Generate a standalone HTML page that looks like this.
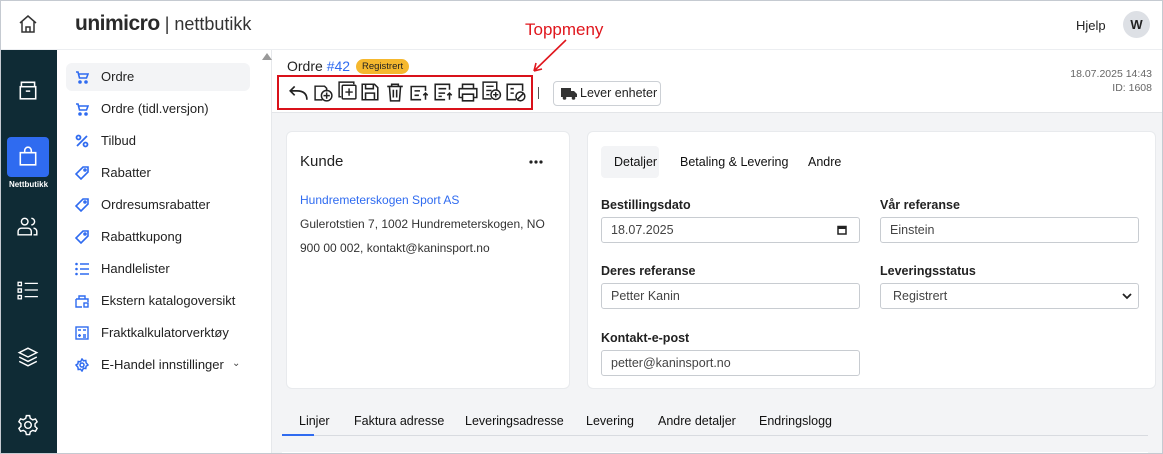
<!DOCTYPE html>
<html><head><meta charset="utf-8"><style>
*{box-sizing:border-box;margin:0;padding:0}
body{width:1163px;height:454px;overflow:hidden;font-family:"Liberation Sans",sans-serif;color:#222;background:#fff;position:relative}
.frame{position:absolute;inset:0;border:1px solid #c5cad1;pointer-events:none;z-index:9}
.hdr{position:absolute;left:0;top:0;width:1163px;height:50px;border-bottom:1px solid #eceef1;background:#fff}
.rail{position:absolute;left:0;top:50px;width:57px;height:404px;background:#0f2b35}
.side{position:absolute;left:57px;top:50px;width:215px;height:404px;background:#fff;border-right:1px solid #e6e8eb}
.main{position:absolute;left:272px;top:50px;width:891px;height:404px;background:#f3f4f6}
.tb{position:absolute;left:0;top:0;width:891px;height:63px;background:#fff;border-bottom:1px solid #e3e5e8}
.item{position:absolute;left:9px;width:184px;height:28px;border-radius:6px;font-size:13px;line-height:28px;padding-left:35px;color:#222}
.item svg{position:absolute;left:9px;top:7px}
.card{position:absolute;background:#fff;border-radius:6px;border:1px solid #e8eaed}
.lbl{position:absolute;font-size:12.5px;font-weight:bold;color:#222}
.inp{position:absolute;height:26px;border:1px solid #c8ccd1;border-radius:3px;font-size:12.5px;line-height:24px;padding-left:9px;color:#444;background:#fff}
.tab{position:absolute;font-size:12.5px;color:#111}
.ic{position:absolute;top:32px}
</style></head><body>
<div class="hdr">
 <svg style="position:absolute;left:18px;top:14px" width="20" height="20" viewBox="0 0 20 20" fill="none" stroke="#333" stroke-width="1.5"><path d="M2 9 10 2l8 7M4 7.5V18h12V7.5M8 18v-5h4v5"/></svg>
 <div style="position:absolute;left:75px;top:12px;font-size:21px;font-weight:bold;letter-spacing:-0.5px;color:#2a2a2a">unimicro<span style="font-weight:normal;font-size:18px;color:#333;letter-spacing:0"> | nettbutikk</span></div>
 <div style="position:absolute;left:1076px;top:18px;font-size:13px">Hjelp</div>
 <div style="position:absolute;left:1123px;top:11px;width:27px;height:27px;border-radius:50%;background:#dde0e5;font-size:13px;font-weight:bold;text-align:center;line-height:27px">W</div>
</div>
<div class="rail">
 <svg style="position:absolute;left:17px;top:29px" width="22" height="22" viewBox="0 0 20 20" fill="none" stroke="#fff" stroke-width="1.4"><rect x="3" y="7" width="14" height="11"/><path d="M4 7V3h12v4M8 11h4"/></svg>
 <div style="position:absolute;left:7px;top:87px;width:42px;height:40px;background:#2f6bf0;border-radius:4px"></div>
 <svg style="position:absolute;left:17px;top:95px" width="22" height="22" viewBox="0 0 20 20" fill="none" stroke="#fff" stroke-width="1.4"><path d="M3 7h14v11H3zM7 7V5a3 3 0 0 1 6 0v2"/></svg>
 <div style="position:absolute;left:0;top:130px;width:57px;text-align:center;color:#fff;font-size:8px;font-weight:bold">Nettbutikk</div>
 <svg style="position:absolute;left:17px;top:165px" width="22" height="22" viewBox="0 0 20 20" fill="none" stroke="#fff" stroke-width="1.3"><circle cx="7" cy="6" r="3"/><path d="M1 18v-3a3 3 0 0 1 3-3h6a3 3 0 0 1 3 3v3zM13 3a3 3 0 0 1 0 6M15 12a3 3 0 0 1 3 3v3h-3"/></svg>
 <svg style="position:absolute;left:17px;top:229px" width="22" height="22" viewBox="0 0 20 20" fill="none" stroke="#fff" stroke-width="1.2"><rect x="1" y="3" width="3" height="3"/><rect x="1" y="9" width="3" height="3"/><rect x="1" y="15" width="3" height="3"/><path d="M7 4h12M7 10h12M7 16h12"/></svg>
 <svg style="position:absolute;left:17px;top:296px" width="22" height="22" viewBox="0 0 20 20" fill="none" stroke="#fff" stroke-width="1.3"><path d="M10 2 2 6l8 4 8-4zM2 10l8 4 8-4M2 14l8 4 8-4"/></svg>
 <svg style="position:absolute;left:17px;top:364px" width="22" height="22" viewBox="0 0 20 20" fill="none" stroke="#fff" stroke-width="1.3"><circle cx="10" cy="10" r="3"/><path d="M8.5 1.5h3l.6 2.5 2.2 1.3 2.5-.8 1.5 2.6-1.9 1.8v2.4l1.9 1.8-1.5 2.6-2.5-.8-2.2 1.3-.6 2.5h-3l-.6-2.5-2.2-1.3-2.5.8-1.5-2.6 1.9-1.8V8.8L1.7 7l1.5-2.6 2.5.8L7.9 4z"/></svg>
</div>
<div class="side">
 <div style="position:absolute;left:205px;top:3px;width:0;height:0;border-left:5px solid transparent;border-right:5px solid transparent;border-bottom:7px solid #999"></div>
 <div class="item" style="top:13px;background:#f3f4f6">Ordre<svg width="14" height="14" viewBox="0 0 14 14" fill="none" stroke="#2f6bf0" stroke-width="1.6"><path d="M1 2h2l1.5 6h7L13 4H4"/><circle cx="5" cy="12" r="1" fill="#2f6bf0"/><circle cx="11" cy="12" r="1" fill="#2f6bf0"/></svg></div>
 <div class="item" style="top:45px">Ordre (tidl.versjon)<svg width="14" height="14" viewBox="0 0 14 14" fill="none" stroke="#2f6bf0" stroke-width="1.6"><path d="M1 2h2l1.5 6h7L13 4H4"/><circle cx="5" cy="12" r="1" fill="#2f6bf0"/><circle cx="11" cy="12" r="1" fill="#2f6bf0"/></svg></div>
 <div class="item" style="top:77px">Tilbud<svg width="14" height="14" viewBox="0 0 14 14" fill="none" stroke="#2f6bf0" stroke-width="1.8"><circle cx="3.5" cy="3.5" r="2"/><circle cx="10.5" cy="10.5" r="2"/><path d="M12 2 2 12"/></svg></div>
 <div class="item" style="top:109px">Rabatter<svg width="14" height="14" viewBox="0 0 14 14" fill="none" stroke="#2f6bf0" stroke-width="1.6"><path d="M8 1h5v5l-7 7-5-5z"/><circle cx="10" cy="4" r="1"/></svg></div>
 <div class="item" style="top:141px">Ordresumsrabatter<svg width="14" height="14" viewBox="0 0 14 14" fill="none" stroke="#2f6bf0" stroke-width="1.6"><path d="M8 1h5v5l-7 7-5-5z"/><circle cx="10" cy="4" r="1"/></svg></div>
 <div class="item" style="top:173px">Rabattkupong<svg width="14" height="14" viewBox="0 0 14 14" fill="none" stroke="#2f6bf0" stroke-width="1.6"><path d="M8 1h5v5l-7 7-5-5z"/><circle cx="10" cy="4" r="1"/></svg></div>
 <div class="item" style="top:205px">Handlelister<svg width="14" height="14" viewBox="0 0 14 14" fill="#2f6bf0" stroke="#2f6bf0" stroke-width="1.6"><circle cx="1.5" cy="2" r="1.3" stroke="none"/><circle cx="1.5" cy="7" r="1.3" stroke="none"/><circle cx="1.5" cy="12" r="1.3" stroke="none"/><path d="M5 2h9M5 7h9M5 12h9"/></svg></div>
 <div class="item" style="top:237px">Ekstern katalogoversikt<svg width="14" height="14" viewBox="0 0 14 14" fill="none" stroke="#2f6bf0" stroke-width="1.4"><path d="M1 5h12v3M1 5v8h6M4 5V2h6v3"/><rect x="9" y="9" width="4" height="4"/></svg></div>
 <div class="item" style="top:269px">Fraktkalkulatorverktøy<svg width="14" height="14" viewBox="0 0 14 14" fill="none" stroke="#2f6bf0" stroke-width="1.4"><rect x="1" y="1" width="12" height="12"/><path d="M3 4h3M4.5 8v3M3 9.5h3M8 4h3M8 9h3M8 11h3"/></svg></div>
 <div class="item" style="top:301px">E-Handel innstillinger<span style="position:absolute;left:166px;top:-1px;font-size:10px;color:#444">&#8964;</span><svg width="14" height="14" viewBox="0 0 14 14" fill="none" stroke="#2f6bf0" stroke-width="1.5"><circle cx="7" cy="7" r="2"/><path d="M7 1l1.5 1.8 2.3-.3.3 2.3L13 7l-1.9 1.2-.3 2.3-2.3-.3L7 13l-1.5-1.8-2.3.3-.3-2.3L1 7l1.9-1.2.3-2.3 2.3.3z"/></svg></div>
</div>
<div class="main">
 <div class="tb">
  <div style="position:absolute;left:15px;top:8px;font-size:14px">Ordre <span style="color:#2f6bf0">#42</span></div>
  <div style="position:absolute;left:84px;top:9px;background:#f5b82e;border-radius:8px;font-size:9.5px;padding:0 6px;line-height:15px">Registrert</div>
  <div style="position:absolute;left:5px;top:25px;width:256px;height:35px;border:2px solid #d9111a"></div>
  <svg class="ic" style="left:16px" width="20" height="20" viewBox="0 0 18 18" fill="none" stroke="#222" stroke-width="1.5"><path d="M17 16c0-6-4-8-9-8H2M6 4 2 8l4 4"/></svg>
  <svg class="ic" style="left:41px" width="21" height="21" viewBox="0 0 20 20" fill="none" stroke="#222" stroke-width="1.4"><path d="M9 17H2V4h9l2 2v3"/><circle cx="13" cy="13" r="5"/><path d="M13 10v6M10 13h6"/></svg>
  <svg class="ic" style="left:65px;top:30px" width="21" height="21" viewBox="0 0 20 20" fill="none" stroke="#222" stroke-width="1.4"><path d="M4 16H2V2h14v2"/><rect x="5" y="5" width="13" height="13" rx="1"/><path d="M11.5 8v7M8 11.5h7"/></svg>
  <svg class="ic" style="left:88px" width="20" height="20" viewBox="0 0 18 18" fill="none" stroke="#222" stroke-width="1.4"><path d="M2 2h11l3 3v11H2z"/><path d="M5 2v4h7V2M5 16v-6h8v6"/></svg>
  <svg class="ic" style="left:113px" width="20" height="20" viewBox="0 0 18 18" fill="none" stroke="#222" stroke-width="1.4"><path d="M2 4h14M6 4V2h6v2M4 4l1 13h8l1-13M7.5 7v7M10.5 7v7"/></svg>
  <svg class="ic" style="left:137px" width="22" height="20" viewBox="0 0 20 18" fill="none" stroke="#222" stroke-width="1.4"><path d="M11 16H2V4h13v4M5 8h5M5 12h4M15 16v-6M13 12l2-2 2 2"/></svg>
  <svg class="ic" style="left:161px" width="22" height="20" viewBox="0 0 20 18" fill="none" stroke="#222" stroke-width="1.4"><path d="M11 16H2V2h13v5M5 6h7M5 10h6M5 13h3M15 16v-6M13 12l2-2 2 2"/></svg>
  <svg class="ic" style="left:185px" width="22" height="20" viewBox="0 0 20 18" fill="none" stroke="#222" stroke-width="1.4"><path d="M5 6V2h10v4M5 14H2V6h16v8h-3M5 11h10v6H5z"/></svg>
  <svg class="ic" style="left:209px;top:30px" width="21" height="21" viewBox="0 0 20 20" fill="none" stroke="#222" stroke-width="1.4"><path d="M10 18H2V2h13v7M5 6h7M5 10h5M5 14h3"/><circle cx="14" cy="14" r="4.5"/><path d="M14 11.5v5M11.5 14h5"/></svg>
  <svg class="ic" style="left:233px" width="22" height="20" viewBox="0 0 20 18" fill="none" stroke="#222" stroke-width="1.4"><path d="M10 16H2V2h14v6M5 6h3M5 10h3"/><circle cx="14" cy="13" r="4"/><path d="M11.5 15.5l5-5"/></svg>
  <div style="position:absolute;left:266px;top:37px;width:1px;height:12px;background:#555"></div>
  <div style="position:absolute;left:281px;top:31px;width:108px;height:25px;border:1px solid #ccd0d5;border-radius:4px;font-size:12.5px;line-height:23px;padding-left:26px;color:#222">Lever enheter
   <svg style="position:absolute;left:7px;top:6px" width="16" height="12" viewBox="0 0 16 12" fill="#333"><rect x="0" y="0" width="10" height="9"/><path d="M10 3h3l3 3v3h-6z"/><circle cx="3.5" cy="10" r="1.8"/><circle cx="12.5" cy="10" r="1.8"/></svg></div>
  <div style="position:absolute;right:11px;top:17px;font-size:10.5px;color:#666;text-align:right;line-height:14px">18.07.2025 14:43<br>ID: 1608</div>
 </div>
 <div class="card" style="left:14px;top:81px;width:284px;height:258px">
  <div style="position:absolute;left:13px;top:21px;font-size:15px">Kunde</div>
  <svg style="position:absolute;left:242px;top:28px" width="14" height="4" viewBox="0 0 14 4" fill="#222"><circle cx="2" cy="2" r="1.6"/><circle cx="7" cy="2" r="1.6"/><circle cx="12" cy="2" r="1.6"/></svg>
  <div style="position:absolute;left:13px;top:61px;font-size:12px;color:#2f6bf0">Hundremeterskogen Sport AS</div>
  <div style="position:absolute;left:13px;top:85px;font-size:12px;color:#333">Gulerotstien 7, 1002 Hundremeterskogen, NO</div>
  <div style="position:absolute;left:13px;top:109px;font-size:12px;color:#333">900 00 002, kontakt@kaninsport.no</div>
 </div>
 <div class="card" style="left:315px;top:81px;width:569px;height:258px">
  <div style="position:absolute;left:13px;top:14px;width:58px;height:32px;background:#f3f4f6;border-radius:4px"></div>
  <div class="tab" style="left:26px;top:23px">Detaljer</div>
  <div class="tab" style="left:92px;top:23px">Betaling &amp; Levering</div>
  <div class="tab" style="left:220px;top:23px">Andre</div>
  <div class="lbl" style="left:13px;top:66px">Bestillingsdato</div>
  <div class="inp" style="left:13px;top:85px;width:259px">18.07.2025<svg style="position:absolute;right:12px;top:7px" width="10" height="10" viewBox="0 0 10 10" fill="none" stroke="#222" stroke-width="1.5"><rect x="1" y="1.5" width="8" height="7.5"/><path d="M1 3h8" stroke-width="2"/></svg></div>
  <div class="lbl" style="left:292px;top:66px">Vår referanse</div>
  <div class="inp" style="left:292px;top:85px;width:259px">Einstein</div>
  <div class="lbl" style="left:13px;top:132px">Deres referanse</div>
  <div class="inp" style="left:13px;top:151px;width:259px">Petter Kanin</div>
  <div class="lbl" style="left:292px;top:132px">Leveringsstatus</div>
  <div class="inp" style="left:292px;top:151px;width:259px;padding-left:12px">Registrert<svg style="position:absolute;right:6px;top:9px" width="10" height="7" viewBox="0 0 10 7" fill="none" stroke="#222" stroke-width="1.8"><path d="M1 1l4 4 4-4"/></svg></div>
  <div class="lbl" style="left:13px;top:199px">Kontakt-e-post</div>
  <div class="inp" style="left:13px;top:218px;width:259px">petter@kaninsport.no</div>
 </div>
 <div style="position:absolute;left:10px;top:385px;width:866px;height:1px;background:#d8dbe0"></div>
 <div style="position:absolute;left:10px;top:384px;width:32px;height:2px;background:#2f6bf0"></div>
 <div class="tab" style="left:27px;top:364px">Linjer</div>
 <div class="tab" style="left:82px;top:364px">Faktura adresse</div>
 <div class="tab" style="left:193px;top:364px">Leveringsadresse</div>
 <div class="tab" style="left:314px;top:364px">Levering</div>
 <div class="tab" style="left:386px;top:364px">Andre detaljer</div>
 <div class="tab" style="left:487px;top:364px">Endringslogg</div>
 <div style="position:absolute;left:10px;top:402px;width:866px;height:2px;background:#fff"></div>
</div>
<div style="position:absolute;left:525px;top:20px;font-size:17px;color:#e0161d">Toppmeny</div>
<svg style="position:absolute;left:530px;top:38px" width="40" height="36" viewBox="0 0 40 36" fill="none" stroke="#e0161d" stroke-width="1.6"><path d="M36 2 4 33M4 33l2-8M4 33l8-2"/></svg>
<div class="frame"></div>
</body></html>
